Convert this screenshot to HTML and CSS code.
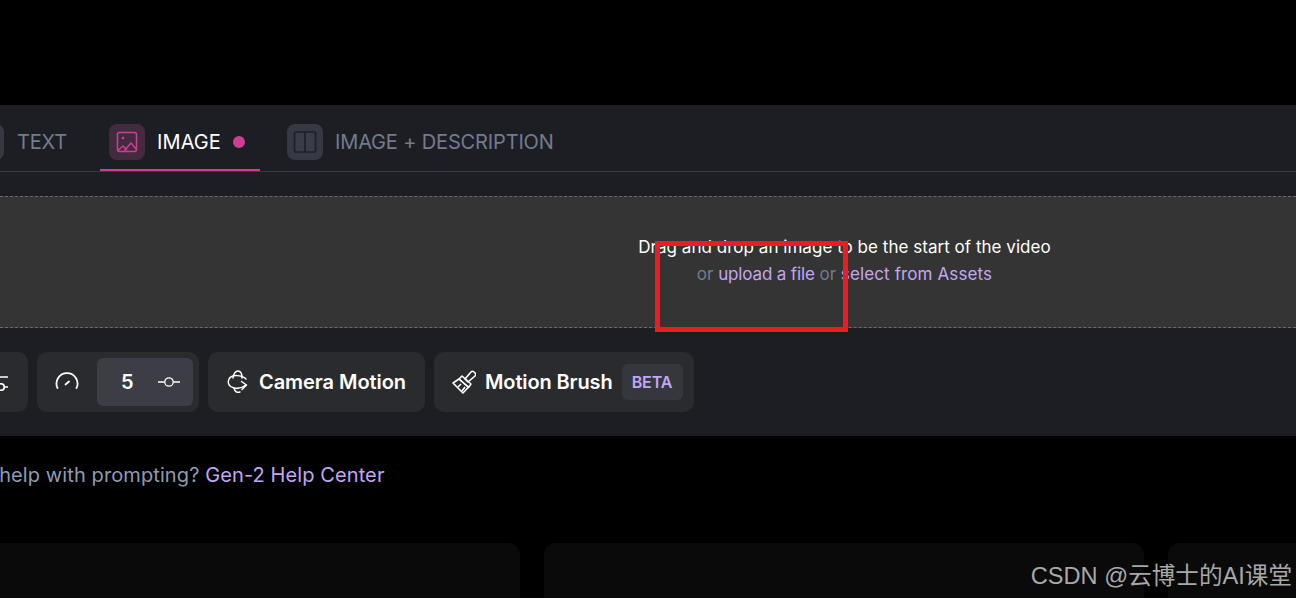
FILE: index.html
```html
<!DOCTYPE html>
<html lang="en">
<head>
  <meta charset="UTF-8">
  <title>Gen-2 Image</title>
  <link rel="stylesheet" href="styles.css">
</head>
<body>
  <div class="panel">
    <!-- Tabs -->
    <div class="tabs">
      <div class="tab">
        <span class="tab-icon"></span>
        <span>TEXT</span>
      </div>
      <div class="tab active">
        <span class="tab-icon">
          <svg width="24" height="24" viewBox="0 0 24 24" fill="none" stroke="currentColor" stroke-width="1.5" stroke-linejoin="round">
            <rect x="2.500" y="2.500" width="19" height="19" rx="2"/>
            <circle cx="8" cy="8" r="1.300" fill="currentColor" stroke="none"/>
            <path d="M3 20.500l5-4.500 4 4"/>
            <path d="M9 21l7-8 5.500 6.500"/>
          </svg>
        </span>
        <span>IMAGE</span>
        <span class="dot"></span>
      </div>
      <div class="tab">
        <span class="tab-icon">
          <svg width="24" height="24" viewBox="0 0 24 24" fill="#3a3c47" stroke="#1f2027" stroke-width="1.700">
            <rect x="1.500" y="2" width="21" height="20" rx="2"/>
            <path d="M12 2v20"/>
          </svg>
        </span>
        <span>IMAGE + DESCRIPTION</span>
      </div>
    </div>

    <!-- Drop area -->
    <div class="dropzone">
      <p class="drop-title">Drag and drop an image to be the start of the video</p>
      <p class="drop-sub">or <a>upload a file</a> or <a>select from Assets</a></p>
    </div>

    <!-- Toolbar -->
    <div class="toolbar">
      <div class="tool tool-first">
        <svg width="18" height="18" viewBox="0 0 18 18" fill="none" stroke="#fff" stroke-width="1.600">
          <path d="M0 4h18M0 14h7.500M14.500 14H18"/>
          <circle cx="11" cy="14" r="3.300"/>
        </svg>
      </div>
      <div class="tool tool-speed">
        <svg class="gauge" width="24" height="24" viewBox="0 0 24 24" fill="none" stroke="#fff" stroke-width="1.800" stroke-linecap="round">
          <path d="M2.500 18a10.500 10.500 0 1 1 19 0"/>
          <path d="M10.500 14.500l3.500-3"/>
        </svg>
        <div class="speed-box">
          <span class="speed-val">5</span>
          <svg width="22" height="12" viewBox="0 0 22 12" fill="none" stroke="#fff" stroke-width="1.300">
            <path d="M0 6h6.500M15.500 6H22"/>
            <circle cx="11" cy="6" r="4.200"/>
          </svg>
        </div>
      </div>
      <div class="tool tool-camera">
        <svg width="24" height="24" viewBox="4 4 24 24" fill="none" stroke="#fff" stroke-width="1.500" stroke-linecap="round" stroke-linejoin="round">
          <path d="M24 13C20 9 10 8 7 13c-2 4 0 8 5 9 4 1 8 0 12-3"/>
          <path d="M19.500 15.500L24.500 19 20 23.500"/>
          <path d="M11 12c1-6 3-7 5-7 3 0 4 4 4 7"/>
          <path d="M12 22c1 4 3 5 6 4"/>
        </svg>
        <span>Camera Motion</span>
      </div>
      <div class="tool tool-brush">
        <svg width="24" height="24" viewBox="4 4 24 24" fill="none" stroke="#fff" stroke-width="1.600" stroke-linejoin="round">
          <path d="M17 13l6-7c1-1 2-1 3 0l1 1c1 1 1 2 0 3l-7 6z"/>
          <path d="M14 10l9 8-2.500 3.500L11 13z"/>
          <path d="M11 13l-6 4 10 10 5.500-6z"/>
          <path d="M10 21l3-3M14 25l3-4" />
        </svg>
        <span class="brush-label">Motion Brush</span>
        <span class="beta">BETA</span>
      </div>
    </div>
  </div>

  <p class="help">Need help with prompting? <a>Gen-2 Help Center</a></p>

  <!-- Cards -->
  <div class="cards">
    <div class="card"></div>
    <div class="card"></div>
    <div class="card"></div>
  </div>

  <!-- Overlays on the screenshot -->
  <div class="red-box"></div>
  <div class="watermark">CSDN @云博士的AI课堂</div>
</body>
</html>
```

FILE: styles.css
```css
body {
  margin: 0;
  height: 598px;
  padding-top: 105px;
  box-sizing: border-box;
  overflow: hidden;
  position: relative;
  background-color: #000;
  font-family: Inter, "Noto Sans", sans-serif;
}

p {
  margin: 0;
}

.panel {
  height: 331px;
  box-sizing: border-box;
  background-color: #1d1e24;
}

/* Tabs */
.tabs {
  display: flex;
  gap: 18px;
  margin-left: -39px;
  padding-top: 19px;
  border-bottom: 1px solid #3a3b40;
}

.tab {
  display: flex;
  align-items: center;
  gap: 12px;
  padding: 0 15px 9px 9px;
  border-bottom: 2px solid transparent;
  font-size: 20px;
  letter-spacing: -0.15px;
  color: #737b8f;
}

.tab:first-child {
  width: 121px;
  box-sizing: border-box;
  gap: 13px;
}

.tab-icon {
  display: flex;
  align-items: center;
  justify-content: center;
  width: 36px;
  height: 36px;
  border-radius: 8px;
  background-color: #363842;
}

.tab.active {
  width: 160px;
  box-sizing: border-box;
  color: #fff;
  border-bottom-color: #cb3f95;
}

.tab.active span:nth-child(2) {
  flex: 1;
  letter-spacing: 0.1px;
}

.tab.active .tab-icon {
  background-color: #432a3e;
  color: #cb3f95;
}

.dot {
  width: 12px;
  height: 12px;
  border-radius: 50%;
  background-color: #cb3f95;
}

/* Drop area */
.dropzone {
  height: 132px;
  box-sizing: border-box;
  margin-top: 24px;
  padding: 37px 0 0 393px;
  border-top: 1px dashed #6b6b6b;
  border-bottom: 1px dashed #6b6b6b;
  background-color: #343434;
  text-align: center;
  font-size: 17px;
  line-height: 27px;
}

.drop-title {
  color: #fff;
  letter-spacing: 0.03px;
}

.drop-sub {
  color: #737b8f;
}

.drop-sub a {
  color: #c3a6f5;
}

.drop-sub a:first-child {
  letter-spacing: -0.15px;
}

.drop-sub a:last-child {
  letter-spacing: 0.12px;
}

/* Toolbar */
.toolbar {
  display: flex;
  gap: 9px;
  margin-top: 24px;
  margin-left: -92px;
}

.tool {
  display: flex;
  align-items: center;
  height: 60px;
  box-sizing: border-box;
  border-radius: 10px;
  background-color: #2a2b2f;
  color: #fff;
  font-size: 20px;
  font-weight: 600;
  letter-spacing: -0.05px;
}

.tool-first {
  width: 120px;
  justify-content: flex-end;
  padding-right: 20px;
}

.tool-speed {
  width: 162px;
  padding: 0 6px 0 18px;
}

.gauge {
  flex: none;
}

.speed-box {
  display: flex;
  align-items: center;
  justify-content: space-between;
  width: 96px;
  height: 48px;
  box-sizing: border-box;
  margin-left: 18px;
  padding: 0 13px 0 24px;
  border-radius: 6px;
  background-color: #3c3d45;
}

.tool-camera {
  width: 217px;
  gap: 9px;
  padding-left: 18px;
}

.tool-brush {
  width: 260px;
  gap: 9px;
  padding-left: 18px;
}

.brush-label {
  letter-spacing: -0.12px;
}

.beta {
  width: 61px;
  height: 36px;
  line-height: 36px;
  text-align: center;
  border-radius: 6px;
  background-color: #36373c;
  color: #c3a6f5;
  font-size: 16px;
}

/* Help line */
.help {
  margin: 27px 0 0 -57.600px;
  font-size: 20px;
  line-height: 24px;
  letter-spacing: 0.1px;
  color: #8f9bb3;
  white-space: nowrap;
}

.help a {
  color: #c3a6f5;
}

/* Cards */
.cards {
  display: flex;
  gap: 24px;
  margin: 56px 0 0 -80px;
}

.card {
  flex: none;
  width: 600px;
  height: 200px;
  border-radius: 12px;
  background-color: #0a0a0a;
}

/* Overlays */
.red-box {
  position: absolute;
  left: 655px;
  top: 241px;
  width: 193px;
  height: 91px;
  box-sizing: border-box;
  border: 5px solid #ed1c24;
}

.watermark {
  position: absolute;
  right: 4px;
  top: 561px;
  font-family: "Liberation Sans", "Noto Sans CJK SC", sans-serif;
  font-size: 23.600px;
  line-height: 30px;
  color: #a8a8a8;
  white-space: nowrap;
}
```
